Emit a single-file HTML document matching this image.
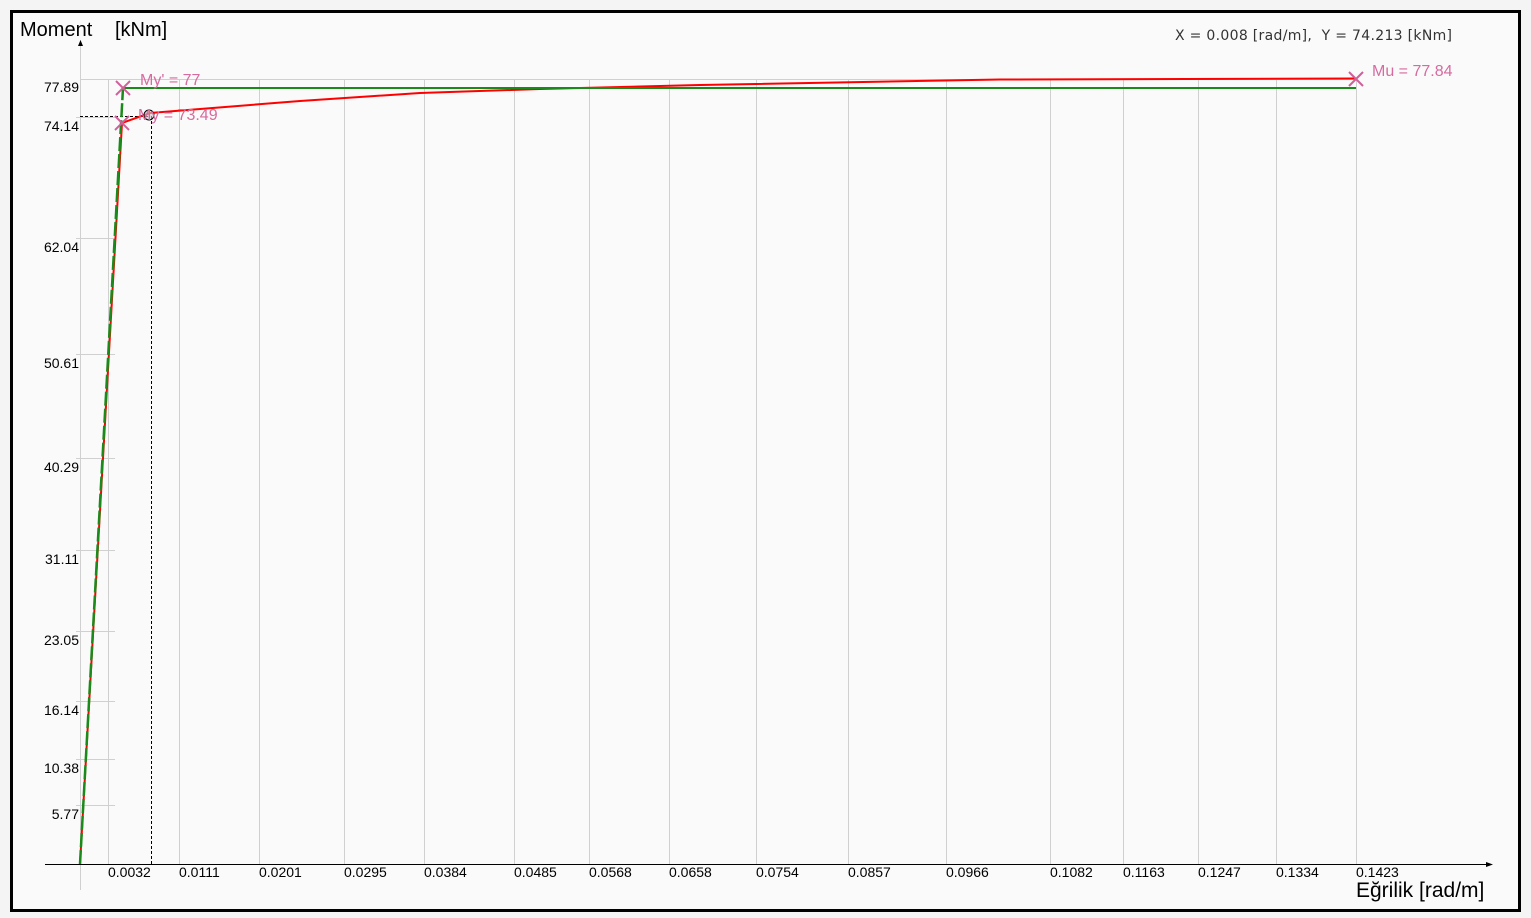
<!DOCTYPE html>
<html><head><meta charset="utf-8"><style>
html,body{margin:0;padding:0;background:#f9f9f9;}
svg{display:block;}
</style></head><body>
<svg width="1531" height="918" xmlns="http://www.w3.org/2000/svg" font-family="Liberation Sans, sans-serif">
<rect x="0" y="0" width="1531" height="918" fill="#f4f4f4"/>
<rect x="11.5" y="11.5" width="1508" height="899" fill="#fafafa" stroke="#000" stroke-width="3"/>
<g stroke="#d0d0d0" stroke-width="1">
<line x1="80.5" y1="40" x2="80.5" y2="890"/>
<line x1="80" y1="79.5" x2="1356" y2="79.5"/>
<line x1="76" y1="117.5" x2="115" y2="117.5"/>
<line x1="76" y1="238.5" x2="115" y2="238.5"/>
<line x1="76" y1="354.5" x2="115" y2="354.5"/>
<line x1="76" y1="458.5" x2="115" y2="458.5"/>
<line x1="76" y1="550.5" x2="115" y2="550.5"/>
<line x1="76" y1="631.5" x2="115" y2="631.5"/>
<line x1="76" y1="701.5" x2="115" y2="701.5"/>
<line x1="76" y1="759.5" x2="115" y2="759.5"/>
<line x1="76" y1="805.5" x2="115" y2="805.5"/>
<line x1="108.5" y1="79" x2="108.5" y2="864"/>
<line x1="179.5" y1="79" x2="179.5" y2="864"/>
<line x1="259.5" y1="79" x2="259.5" y2="864"/>
<line x1="344.5" y1="79" x2="344.5" y2="864"/>
<line x1="424.5" y1="79" x2="424.5" y2="864"/>
<line x1="514.5" y1="79" x2="514.5" y2="864"/>
<line x1="589.5" y1="79" x2="589.5" y2="864"/>
<line x1="669.5" y1="79" x2="669.5" y2="864"/>
<line x1="756.5" y1="79" x2="756.5" y2="864"/>
<line x1="848.5" y1="79" x2="848.5" y2="864"/>
<line x1="946.5" y1="79" x2="946.5" y2="864"/>
<line x1="1050.5" y1="79" x2="1050.5" y2="864"/>
<line x1="1123.5" y1="79" x2="1123.5" y2="864"/>
<line x1="1198.5" y1="79" x2="1198.5" y2="864"/>
<line x1="1276.5" y1="79" x2="1276.5" y2="864"/>
<line x1="1356.5" y1="79" x2="1356.5" y2="864"/>
</g>
<line x1="45" y1="864.5" x2="1488" y2="864.5" stroke="#000"/>
<path d="M1486 862 L1493 864.5 L1486 867Z" fill="#000"/>
<path d="M78 46 L80.5 40 L83 46Z" fill="#000"/>
<g stroke="#000" stroke-dasharray="3,2" stroke-width="1">
<line x1="80" y1="116.5" x2="150" y2="116.5"/>
<line x1="151.5" y1="116" x2="151.5" y2="864"/>
</g>
<polyline points="80,864 122,123 150,113 300,101 420,93 540,89 700,85 1000,79.5 1356,78.5" fill="none" stroke="#ff0000" stroke-width="2"/>
<polyline points="80,864 123,88" fill="none" stroke="#1a8a1a" stroke-width="2.5" stroke-dasharray="14,3"/>
<polyline points="123,88 1356,88" fill="none" stroke="#1a8a1a" stroke-width="2"/>
<g stroke="#d0609a" stroke-width="2">
<path d="M116 81 L130 95 M130 81 L116 95"/>
<path d="M115 116 L129 130 M129 116 L115 130"/>
<path d="M1349 72 L1363 86 M1363 72 L1349 86"/>
</g>
<circle cx="149" cy="115" r="5" fill="#ccc" fill-opacity="0.6" stroke="#000" stroke-width="1"/>
<g fill="#d66ba0" font-size="16">
<text x="140" y="85">My' = 77</text>
<text x="138" y="120">My = 73.49</text>
<text x="1372" y="76">Mu = 77.84</text>
</g>
<text x="20" y="36" font-size="20" fill="#000">Moment</text>
<text x="115" y="36" font-size="20" fill="#000">[kNm]</text>
<text x="1175" y="40" font-size="14" fill="#333" font-family="DejaVu Sans, sans-serif" textLength="277" xml:space="preserve">X = 0.008 [rad/m],  Y = 74.213 [kNm]</text>
<text x="1356" y="897" font-size="21" fill="#000">Eğrilik [rad/m]</text>
<g font-size="14" fill="#000" text-anchor="end">
<text x="79" y="92">77.89</text>
<text x="79" y="131">74.14</text>
<text x="79" y="252">62.04</text>
<text x="79" y="368">50.61</text>
<text x="79" y="472">40.29</text>
<text x="79" y="564">31.11</text>
<text x="79" y="645">23.05</text>
<text x="79" y="715">16.14</text>
<text x="79" y="773">10.38</text>
<text x="79" y="819">5.77</text>
</g>
<g font-size="14" fill="#000">
<text x="108" y="877">0.0032</text>
<text x="179" y="877">0.0111</text>
<text x="259" y="877">0.0201</text>
<text x="344" y="877">0.0295</text>
<text x="424" y="877">0.0384</text>
<text x="514" y="877">0.0485</text>
<text x="589" y="877">0.0568</text>
<text x="669" y="877">0.0658</text>
<text x="756" y="877">0.0754</text>
<text x="848" y="877">0.0857</text>
<text x="946" y="877">0.0966</text>
<text x="1050" y="877">0.1082</text>
<text x="1123" y="877">0.1163</text>
<text x="1198" y="877">0.1247</text>
<text x="1276" y="877">0.1334</text>
<text x="1356" y="877">0.1423</text>
</g>
</svg>
</body></html>
